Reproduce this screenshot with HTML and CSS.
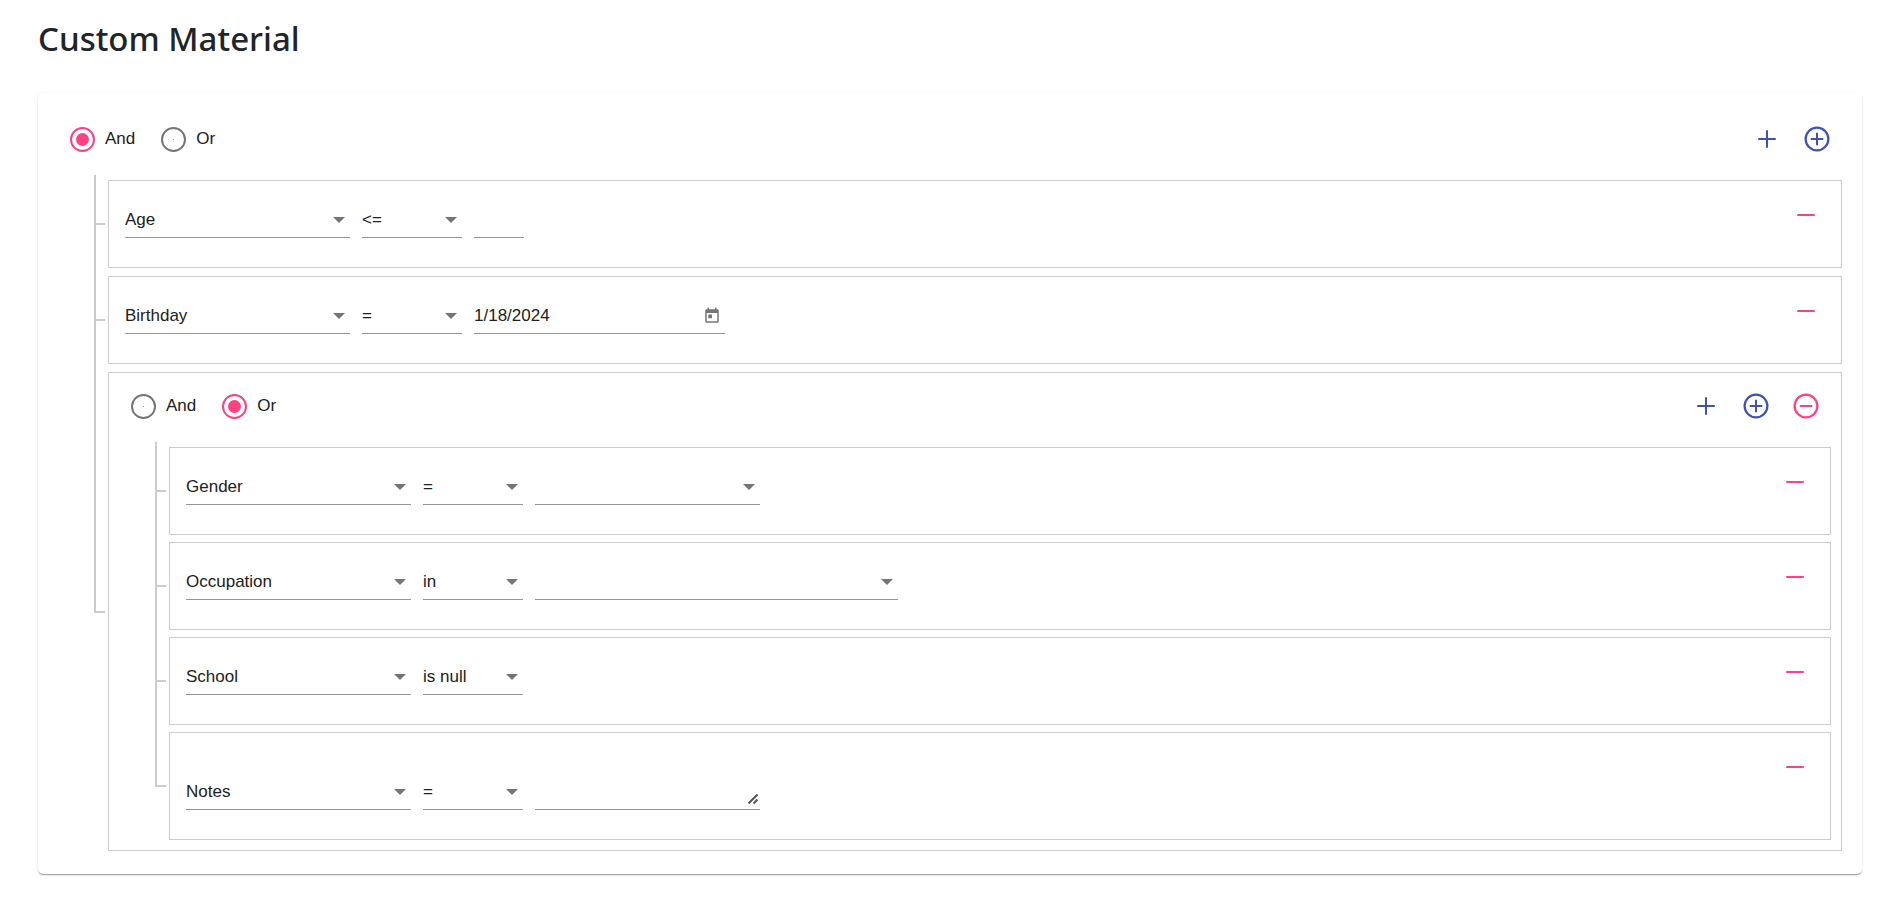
FILE: index.html
```html
<!DOCTYPE html>
<html lang="en">
<head>
<meta charset="utf-8">
<title>Custom Material</title>
<link rel="stylesheet" href="styles.css">
</head>
<body>
<svg class="sprite" aria-hidden="true">
  <symbol id="plus" viewBox="0 0 24 24"><path d="M19 12.8h-6.2V19h-1.6v-6.2H5v-1.6h6.2V5h1.6v6.2H19z"/></symbol>
  <symbol id="minus" viewBox="0 0 24 24"><path d="M5 11.2h14v1.6H5z"/></symbol>
  <symbol id="plus-circle" viewBox="0 0 24 24"><path d="M12.8 7h-1.6v4.2H7v1.6h4.2V17h1.6v-4.2H17v-1.6h-4.2V7zM12 2a10 10 0 1 0 0 20 10 10 0 0 0 0-20zm0 18.2a8.2 8.2 0 1 1 0-16.4 8.2 8.2 0 0 1 0 16.4z"/></symbol>
  <symbol id="minus-circle" viewBox="0 0 24 24"><path d="M7 11.2v1.6h10v-1.6H7zM12 2a10 10 0 1 0 0 20 10 10 0 0 0 0-20zm0 18.2a8.2 8.2 0 1 1 0-16.4 8.2 8.2 0 0 1 0 16.4z"/></symbol>
  <symbol id="calendar" viewBox="0 0 24 24"><path d="M19 3h-1V1h-2v2H8V1H6v2H5c-1.11 0-1.99.9-1.99 2L3 19c0 1.1.89 2 2 2h14c1.1 0 2-.9 2-2V5c0-1.1-.9-2-2-2zm0 16H5V8h14v11zM7 10h5v5H7z"/></symbol>
</svg>
<main class="page">
  <h1 class="title">Custom Material</h1>
  <section class="card">
    <div class="group">
      <div class="group-header">
        <div class="radios" role="radiogroup" aria-label="Condition">
          <label class="radio"><input type="radio" name="root" checked>And</label>
          <label class="radio"><input type="radio" name="root">Or</label>
        </div>
        <button class="icon-button primary" type="button" aria-label="Add rule"><svg><use href="#plus"/></svg></button>
        <button class="icon-button primary" type="button" aria-label="Add ruleset"><svg><use href="#plus-circle"/></svg></button>
      </div>
      <ul class="tree">
        <li class="node rule">
          <div class="fields">
            <div class="select field-name"><select aria-label="Field"><option>Age</option></select></div>
            <div class="select operator"><select aria-label="Operator"><option>&lt;=</option></select></div>
            <input class="text number" type="text" inputmode="numeric" aria-label="Age value">
          </div>
          <button class="icon-button accent" type="button" aria-label="Remove rule"><svg><use href="#minus"/></svg></button>
        </li>
        <li class="node rule">
          <div class="fields">
            <div class="select field-name"><select aria-label="Field"><option>Birthday</option></select></div>
            <div class="select operator"><select aria-label="Operator"><option>=</option></select></div>
            <div class="date">
              <input class="text" type="text" value="1/18/2024" aria-label="Birthday value">
              <button class="calendar" type="button" aria-label="Open calendar"><svg><use href="#calendar"/></svg></button>
            </div>
          </div>
          <button class="icon-button accent" type="button" aria-label="Remove rule"><svg><use href="#minus"/></svg></button>
        </li>
        <li class="node group">
          <div class="group-header">
            <div class="radios" role="radiogroup" aria-label="Nested condition">
              <label class="radio"><input type="radio" name="nested">And</label>
              <label class="radio"><input type="radio" name="nested" checked>Or</label>
            </div>
            <button class="icon-button primary" type="button" aria-label="Add rule"><svg><use href="#plus"/></svg></button>
            <button class="icon-button primary" type="button" aria-label="Add ruleset"><svg><use href="#plus-circle"/></svg></button>
            <button class="icon-button accent" type="button" aria-label="Remove ruleset"><svg><use href="#minus-circle"/></svg></button>
          </div>
          <ul class="tree nested">
            <li class="node rule">
              <div class="fields">
                <div class="select field-name"><select aria-label="Field"><option>Gender</option></select></div>
                <div class="select operator"><select aria-label="Operator"><option>=</option></select></div>
                <div class="select field-name"><select aria-label="Gender value"><option></option></select></div>
              </div>
              <button class="icon-button accent" type="button" aria-label="Remove rule"><svg><use href="#minus"/></svg></button>
            </li>
            <li class="node rule">
              <div class="fields">
                <div class="select field-name"><select aria-label="Field"><option>Occupation</option></select></div>
                <div class="select operator"><select aria-label="Operator"><option>in</option></select></div>
                <div class="select multiple"><select aria-label="Occupation values"><option></option></select></div>
              </div>
              <button class="icon-button accent" type="button" aria-label="Remove rule"><svg><use href="#minus"/></svg></button>
            </li>
            <li class="node rule">
              <div class="fields">
                <div class="select field-name"><select aria-label="Field"><option>School</option></select></div>
                <div class="select operator"><select aria-label="Operator"><option>is null</option></select></div>
              </div>
              <button class="icon-button accent" type="button" aria-label="Remove rule"><svg><use href="#minus"/></svg></button>
            </li>
            <li class="node rule">
              <div class="fields">
                <div class="select field-name"><select aria-label="Field"><option>Notes</option></select></div>
                <div class="select operator"><select aria-label="Operator"><option>=</option></select></div>
                <div class="area">
                  <textarea aria-label="Notes value"></textarea>
                  <svg class="grip" viewBox="0 0 10 10" aria-hidden="true"><path d="M.5 9.5l9-9M5.5 9.5l4-4"/></svg>
                </div>
              </div>
              <button class="icon-button accent" type="button" aria-label="Remove rule"><svg><use href="#minus"/></svg></button>
            </li>
          </ul>
        </li>
      </ul>
    </div>
  </section>
</main>
</body>
</html>
```
FILE: styles.css
```css
*,
*::before,
*::after { box-sizing: border-box; }

body {
  margin: 0;
  background: #fff;
  color: #212121;
  font: 17px/20px "Liberation Sans", Arial, sans-serif;
}

.sprite { display: none; }

.page { padding: 16px 34px 20px 38px; }

.title {
  margin: 0 0 32px;
  color: #212529;
  font: 500 33px/45px "Noto Sans", "Open Sans", sans-serif;
}

.card {
  padding: 13px 10px;
  border-radius: 5px;
  box-shadow: 0 2px 1px -1px rgba(0, 0, 0, .2), 0 1px 1px rgba(0, 0, 0, .14), 0 1px 3px rgba(0, 0, 0, .12);
}

.group { padding: 8px 10px 10px; }

.group-header {
  display: flex;
  align-items: center;
  margin-bottom: 16px;
}

.radios {
  display: flex;
  flex: 1;
  gap: 26px;
  padding-left: 12px;
}

.radio {
  display: flex;
  align-items: center;
  gap: 10px;
}

.radio input {
  appearance: none;
  display: grid;
  place-items: center;
  width: 25px;
  height: 25px;
  margin: 0;
  border: 2px solid #757575;
  border-radius: 50%;
}

.radio input::before {
  content: "";
  width: 1px;
  height: 1px;
  border-radius: 50%;
  background: #ff4081;
}

.radio input:checked { border-color: #ff4081; }

.radio input:checked::before {
  width: 13px;
  height: 13px;
}

.icon-button {
  display: grid;
  place-items: center;
  width: 50px;
  height: 50px;
  padding: 0;
  border: 0;
  background: none;
}

.icon-button svg {
  width: 30px;
  height: 30px;
  fill: currentColor;
}

.primary { color: #3f51b5; }
.accent { color: #ff4081; }

.tree {
  display: grid;
  gap: 8px;
  margin: 0 0 0 50px;
  padding: 0;
  list-style: none;
}

.tree.nested { gap: 7px; }

.node {
  position: relative;
  border: 1px solid #ccc;
}

/* Connector lines from the parent's trunk to each node */
.node::before,
.node::after {
  content: "";
  position: absolute;
  left: -15px;
  border-left: 2px solid #ccc;
}

.node::before {
  top: -6px;
  width: 11px;
  height: calc(50% + 7px);
  border-bottom: 2px solid #ccc;
}

.node:not(:last-child)::after {
  top: 50%;
  height: calc(50% + 8px);
}

.rule {
  display: flex;
  align-items: flex-start;
  padding: 9px 10px 9px 16px;
}

.fields {
  display: flex;
  flex: 1;
  align-items: flex-end;
  gap: 12px;
  padding: 16px 0 20px;
}

.fields:has(textarea) { padding-top: 0; }

.field-name { width: 225px; }
.operator { width: 100px; }
.multiple { width: 363px; }

.select { position: relative; }

.select::after {
  content: "";
  position: absolute;
  right: 5px;
  bottom: 15px;
  border: 6px solid transparent;
  border-top-color: #757575;
  border-bottom: 0;
  pointer-events: none;
}

select,
.text,
textarea {
  display: block;
  appearance: none;
  width: 100%;
  height: 32px;
  margin: 0;
  padding: 0 0 3px;
  border: 0;
  border-bottom: 1px solid #949494;
  border-radius: 0;
  outline: 0;
  background: transparent;
  color: inherit;
  font: inherit;
}

.text.number { width: 50px; }

.date {
  position: relative;
  width: 251px;
}

.calendar {
  position: absolute;
  right: 4px;
  bottom: 9px;
  display: grid;
  padding: 0;
  border: 0;
  background: none;
}

.calendar svg {
  width: 18px;
  height: 18px;
  fill: #757575;
}

.area {
  position: relative;
  width: 225px;
}

textarea {
  height: 68px;
  resize: none;
}

.grip {
  position: absolute;
  right: 2px;
  bottom: 6px;
  width: 10px;
  height: 10px;
  fill: none;
  stroke: #555;
  stroke-width: 2;
}
```
